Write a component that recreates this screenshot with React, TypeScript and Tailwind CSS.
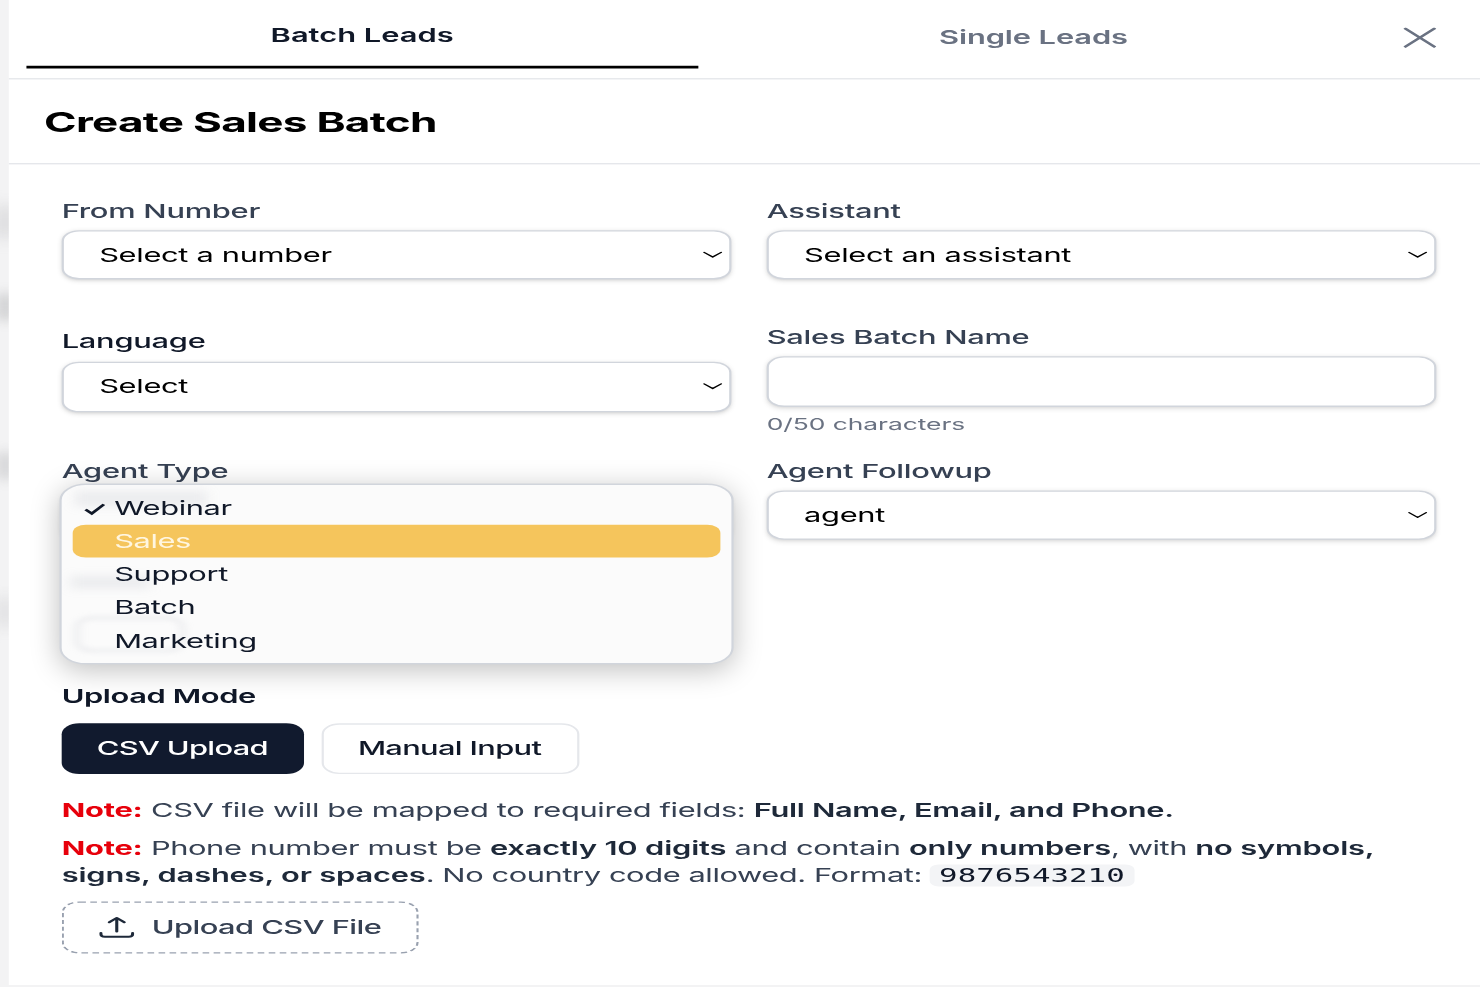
import React from "react";

function Chevron() {
  return (
    <svg viewBox="0 0 10 6" className="w-[9px] h-[6px] shrink-0 text-black" fill="none" stroke="currentColor" strokeWidth="1" strokeLinecap="round" strokeLinejoin="round">
      <path d="M0.7 1 L5 4.8 L9.3 1" />
    </svg>
  );
}

function Field({ label, value, labelClass = "text-gray-700" }: { label: string; value: string; labelClass?: string }) {
  return (
    <div>
      <div className={`h-5 text-sm leading-5 font-medium tracking-[-0.12px] ${labelClass}`}>{label}</div>
      <div className="mt-1 h-9 flex items-center justify-between pl-4 pr-[3px] bg-white border border-gray-300 rounded-lg shadow-sm text-sm tracking-[-0.15px] text-black">
        <span>{value}</span>
        <Chevron />
      </div>
    </div>
  );
}

const options = ["Webinar", "Sales", "Support", "Batch", "Marketing"];
const strong = "font-semibold tracking-[-0.08px] text-gray-800";
const note = "font-bold tracking-[-0.1px] text-red-600";

export default function App() {
  return (
    <div className="relative w-[1480px] h-[987px] overflow-hidden bg-[#f3f3f4] [font-family:Inter,sans-serif] blur-[0.35px]">
      <div className="w-[672px] h-[720.44px] origin-top-left scale-x-[2.203] scale-y-[1.37]">
        {/* blurred page behind the modal */}
        <div className="absolute left-0 top-[150px] w-[5px] h-[24px] bg-[#c4c5c7] blur-[5px]" />
        <div className="absolute left-0 top-[214px] w-[5px] h-[20px] bg-[#b6b7b9] blur-[4px]" />
        <div className="absolute left-0 top-[330px] w-[5px] h-[20px] bg-[#bfc0c2] blur-[4px]" />
        <div className="absolute left-0 top-[436px] w-[5px] h-[22px] bg-[#cfd0d2] blur-[5px]" />

        <div className="relative ml-1 w-[672px] h-[719px] bg-white">
          {/* tabs */}
          <div className="flex h-[58px] pl-2 pr-[24.5px] border-b border-gray-200">
            <div className="flex-1 h-[50px] pt-[15.7px] text-center text-sm leading-5 font-semibold text-gray-900 border-b-2 border-black">
              Batch Leads
            </div>
            <div className="flex-1 h-[50px] pt-[16.5px] text-center text-sm leading-5 font-semibold tracking-[-0.05px] text-gray-500">
              Single Leads
            </div>
            <div className="w-[30px] pt-[19.6px] flex justify-end items-start">
              <svg viewBox="0 0 15 15" className="w-[15px] h-[15px] text-gray-500" fill="none" stroke="currentColor" strokeWidth="1.5">
                <path d="M0.5 0.5 L14.5 14.5 M14.5 0.5 L0.5 14.5" />
              </svg>
            </div>
          </div>

          {/* title */}
          <div className="px-4 pt-[17px] pb-[15.8px] border-b border-gray-200 text-xl leading-7 font-bold tracking-[-0.33px] text-black">Create Sales Batch</div>

          {/* form */}
          <div className="px-6 pt-6">
            <div className="grid grid-cols-2 gap-x-4">
              <div>
                <Field label="From Number" value="Select a number" />
                <div className="mt-[35px]">
                  <div className="h-5 text-sm leading-5 font-medium tracking-[-0.12px] text-gray-900">Language</div>
                  <div className="mt-[5.5px] h-[36.3px] flex items-center justify-between pl-4 pr-[3px] bg-white border border-gray-300 rounded-lg shadow-sm text-sm tracking-[-0.15px] text-black">
                    <span>Select</span>
                    <Chevron />
                  </div>
                </div>
                <div className="mt-[33.3px] relative">
                  <Field label="Agent Type" value="Webinar" />
                  <div className="absolute left-[-1.2px] top-[19.2px] w-[305.7px] h-[131.5px] pt-[5px] pb-1 px-[5px] rounded-xl border border-gray-300 bg-[#fbfbfb] shadow-[0_4px_16px_rgba(0,0,0,0.25)] overflow-hidden text-sm tracking-[-0.18px] text-gray-900">
                    <div className="absolute left-[6px] top-[4px] w-[60px] h-[12px] bg-gray-400/15 blur-[3px]" />
                    <div className="absolute left-[4px] top-[66px] w-[36px] h-[10px] bg-gray-400/15 blur-[3px]" />
                    <div className="absolute left-[6px] top-[96px] w-[50px] h-[26px] rounded-lg border-2 border-gray-400/20 blur-[2px]" />
                    {options.map((o) => (
                      <div
                        key={o}
                        className={`relative h-[24.1px] flex items-center pl-[19px] rounded-md leading-5 ${o === "Sales" ? "bg-[#f5c55c] text-[#fff6e0]" : ""}`}
                      >
                        {o === "Webinar" && (
                          <svg viewBox="0 0 12 12" className="absolute left-[5px] top-[5.5px] w-[10px] h-[13px] text-gray-900" fill="none" stroke="currentColor" strokeWidth="1.9">
                            <path d="M1 6.5 L4.4 10 L11 2" />
                          </svg>
                        )}
                        {o}
                      </div>
                    ))}
                  </div>
                </div>
              </div>

              <div>
                <Field label="Assistant" value="Select an assistant" />
                <div className="mt-[32px]">
                  <div className="h-5 text-sm leading-5 font-medium tracking-[-0.12px] text-gray-700">Sales Batch Name</div>
                  <div className="mt-[4.7px] h-[37px] bg-white border border-gray-300 rounded-lg shadow-sm" />
                  <div className="mt-[5px] h-4 text-xs leading-4 tracking-[-0.03px] text-gray-500">0/50 characters</div>
                </div>
                <div className="mt-[15.4px]">
                  <Field label="Agent Followup" value="agent" />
                </div>
              </div>
            </div>

            {/* upload mode */}
            <div className="mt-[103.8px] h-5 text-sm leading-5 font-semibold tracking-[-0.18px] text-gray-900">Upload Mode</div>
            <div className="mt-[10px] flex gap-2">
              <div className="w-[109.6px] h-[37.5px] flex items-center justify-center rounded-lg bg-[#111a2e] text-sm font-medium tracking-[-0.3px] text-white">CSV Upload</div>
              <div className="w-[117px] h-[37.5px] flex items-center justify-center rounded-lg border border-gray-200 bg-white text-sm font-medium tracking-[-0.3px] text-gray-900">Manual Input</div>
            </div>

            <p className="mt-[16.3px] text-sm leading-5 tracking-[-0.17px] text-gray-700">
              <span className={note}>Note:</span> CSV file will be mapped to required fields:{" "}
              <span className="font-semibold tracking-[-0.15px] text-gray-800">Full Name, Email, and Phone.</span>
            </p>
            <p className="mt-[7.5px] text-sm leading-5 tracking-[-0.19px] text-gray-700">
              <span className={note}>Note:</span> Phone number must be{" "}
              <span className={strong}>exactly 10 digits</span> and contain{" "}
              <span className={strong}>only numbers</span>, with{" "}
              <span className={strong}>no symbols, signs, dashes, or spaces</span>. No country code allowed. Format:{" "}
              <code className="px-1 rounded bg-gray-100 text-gray-900 text-sm tracking-normal [font-family:'DejaVu_Sans_Mono',monospace]">9876543210</code>
            </p>

            <div className="mt-[9px] w-[162px] h-[38px] flex items-center justify-center gap-2 rounded-lg border border-dashed border-gray-400 text-sm font-medium tracking-[-0.25px] text-gray-700">
              <svg viewBox="0 0 16 16" className="w-[16px] h-[16px] text-gray-800" fill="none" stroke="currentColor" strokeWidth="1.4" strokeLinecap="round" strokeLinejoin="round">
                <path d="M8 11 V1 M4.6 4.2 L8 1 L11.4 4.2" />
                <path d="M0.8 12 V13 Q0.8 14.8 2.6 14.8 H13.4 Q15.2 14.8 15.2 13 V12" />
              </svg>
              Upload CSV File
            </div>
          </div>
        </div>
      </div>
    </div>
  );
}
